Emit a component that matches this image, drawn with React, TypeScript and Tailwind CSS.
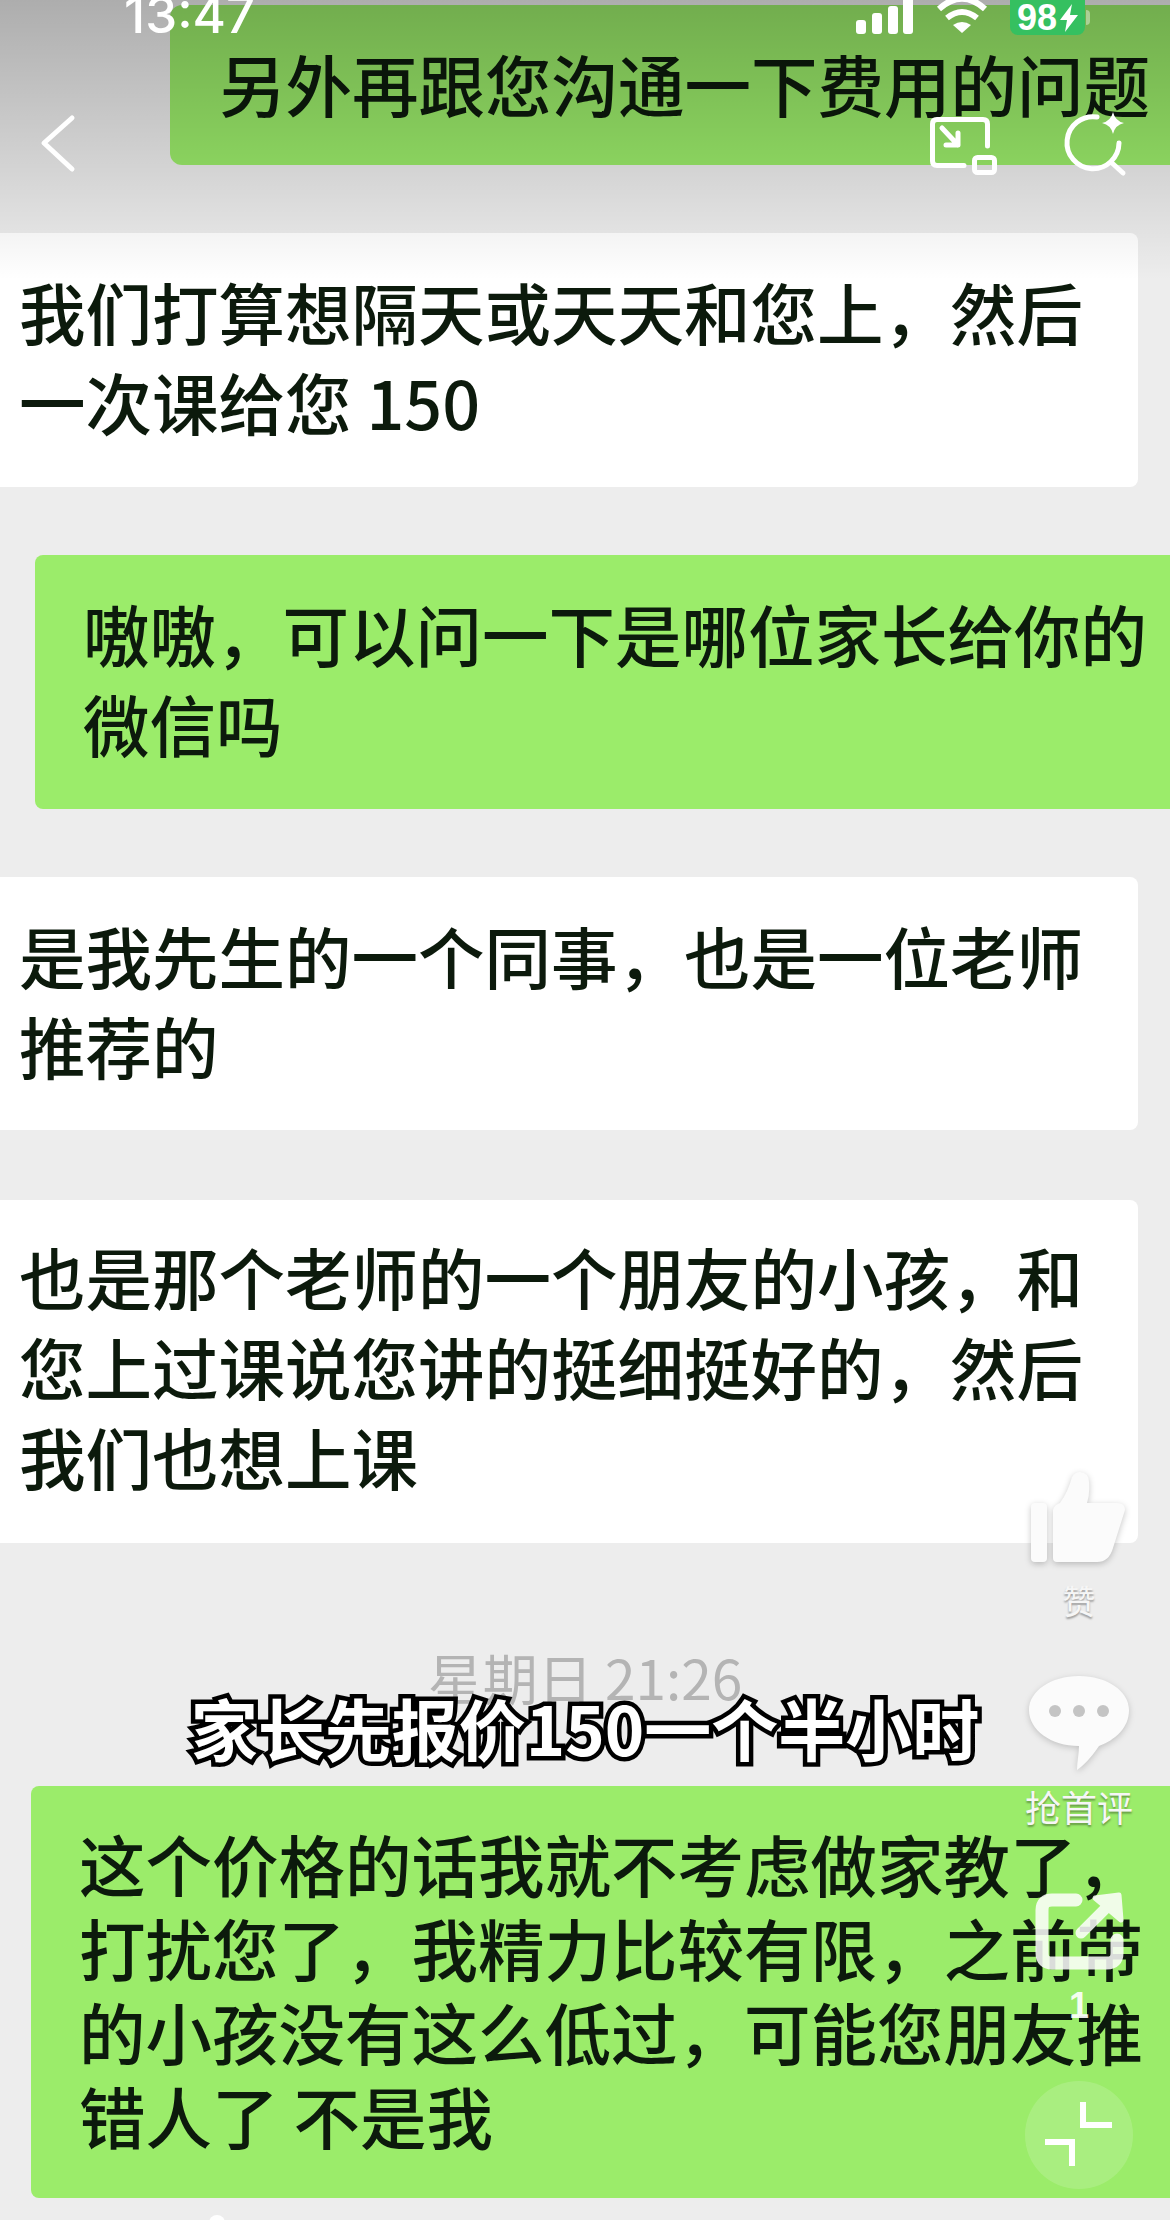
const messages = [
  {
    lines: ['另外再跟您沟通一下费用的问题'],
    box: 'mt-[5px] ml-[170px] h-[160px] pl-[49px] pt-[33px] bg-[#9bec6a] rounded-l-xl',
  },
  {
    lines: ['我们打算想隔天或天天和您上，然后', '一次课给您 150'],
    box: 'mt-[68px] w-[1138px] h-[254px] pl-[19px] pt-[33px] bg-white rounded-r-lg',
  },
  {
    lines: ['嗷嗷，可以问一下是哪位家长给你的', '微信吗'],
    box: 'mt-[68px] ml-[35px] h-[254px] pl-[48px] pt-[33px] bg-[#9bec6a] rounded-l-lg',
  },
  {
    lines: ['是我先生的一个同事，也是一位老师', '推荐的'],
    box: 'mt-[68px] w-[1138px] h-[253px] pl-[19px] pt-[33px] bg-white rounded-r-lg',
  },
  {
    lines: ['也是那个老师的一个朋友的小孩，和', '您上过课说您讲的挺细挺好的，然后', '我们也想上课'],
    box: 'mt-[70px] w-[1138px] h-[343px] pl-[19px] pt-[31px] bg-white rounded-r-lg',
  },
];

const lastLines = [
  '这个价格的话我就不考虑做家教了，',
  '打扰您了，我精力比较有限，之前带',
  '的小孩没有这么低过，可能您朋友推',
  '错人了 不是我',
];

function StatusBar() {
  return (
    <div className="absolute inset-x-0 top-0 flex items-start pl-[124px] pr-[80px] text-white">
      <div className="-mt-[15px] font-['Inter',sans-serif] text-[51px] font-medium leading-[60px]">13:47</div>
      <div className="ml-auto flex items-start">
        <svg width="60" height="34" viewBox="0 0 60 34" fill="white">
          <rect x="0" y="20" width="10" height="14" rx="3" />
          <rect x="16" y="13" width="10" height="21" rx="3" />
          <rect x="32" y="6" width="10" height="28" rx="3" />
          <rect x="47" y="-4" width="10" height="38" rx="3" />
        </svg>
        <svg className="ml-[20px]" width="52" height="34" viewBox="0 0 52 34" fill="none" stroke="white" strokeWidth="6">
          <path d="M3 9 Q26 -12 49 9" />
          <path d="M11 18 Q26 6 41 18" />
          <path d="M26 33 L17 25 Q26 19 35 25 Z" fill="white" stroke="none" />
        </svg>
        <div className="ml-[22px] flex h-[35px] w-[75px] items-center justify-center gap-[3px] rounded-b-[8px] bg-[#35c060] font-['Liberation_Sans',sans-serif] text-[36px] font-bold leading-none">
          98
          <svg width="18" height="28" viewBox="0 0 18 28" fill="white">
            <path d="M12 0 L0 16 H7 L5 28 L18 11 H10 Z" />
          </svg>
        </div>
        <div className="ml-[1px] mt-[10px] h-[15px] w-[4px] rounded-r bg-white/40" />
      </div>
    </div>
  );
}

function NavIcons() {
  return (
    <div className="absolute inset-x-0 top-[112px] flex items-start pl-[40px] pr-[40px]">
      <svg width="36" height="62" viewBox="0 0 36 62" fill="none" stroke="white" strokeWidth="5" strokeLinecap="round" strokeLinejoin="round">
        <path d="M32 6 L4 31 L32 57" />
      </svg>
      <svg className="ml-auto" width="72" height="66" viewBox="0 0 72 66" fill="none" stroke="white" strokeWidth="5" strokeLinecap="round" strokeLinejoin="round">
        <path d="M36 53.5 H9 Q4.5 53.5 4.5 49 V12 Q4.5 7.5 9 7.5 H55 Q59.5 7.5 59.5 12 V34" />
        <path d="M14 16 L30 33 M30 21 V33 H18" />
        <rect x="46.5" y="45.5" width="20" height="15" rx="3" />
      </svg>
      <svg className="ml-[62px]" width="68" height="68" viewBox="0 0 68 68" fill="none" stroke="white" strokeWidth="5" strokeLinecap="round">
        <path d="M35 5 A26 26 0 1 0 57 31" />
        <path d="M50 51 L61 61" />
        <path d="M51 0 Q53 9 62 11 Q53 13 51 22 Q49 13 40 11 Q49 9 51 0 Z" fill="white" stroke="none" />
      </svg>
    </div>
  );
}

function SideActions() {
  return (
    <div className="absolute left-[1019px] top-[1468px] flex w-[120px] flex-col items-center text-white">
      <svg className="drop-shadow-[0_2px_3px_rgba(0,0,0,0.22)]" width="104" height="98" viewBox="0 0 104 98" fill="#fbfbfb">
        <rect x="4" y="35" width="16" height="59" rx="4" />
        <path d="M26 42 Q27 37 33 35 Q41 24 45 9 Q48 4 53 4 Q62 5 62 14 Q63 26 60 35 H90 Q98 35 98 42 L86 80 Q82 94 70 94 H30 Q26 94 26 90 Z" />
      </svg>
      <div className="mt-[14px] text-[33px] leading-[40px] text-[#f6f6f6] [text-shadow:0_2px_2px_rgba(0,0,0,0.35)]">赞</div>
      <svg className="mt-[54px] drop-shadow-[0_2px_3px_rgba(0,0,0,0.18)]" width="104" height="100" viewBox="0 0 104 100" fill="#fbfbfb">
        <path d="M52 2 C80 2 102 17 102 36 C102 54 88 66 72 72 C64 84 56 92 50 96 C50 88 52 80 52 72 C24 72 2 56 2 36 C2 17 24 2 52 2 Z" />
        <circle cx="28" cy="37" r="6" fill="#c4c4c4" />
        <circle cx="52" cy="37" r="6" fill="#c4c4c4" />
        <circle cx="76" cy="37" r="6" fill="#c4c4c4" />
      </svg>
      <div className="mt-[11px] whitespace-nowrap text-[36px] leading-[42px] text-[#f6f6f6] [text-shadow:0_2px_2px_rgba(0,0,0,0.35)]">抢首评</div>
      <svg className="mt-[61px] opacity-85" width="100" height="90" viewBox="0 0 100 90" fill="none" stroke="white" strokeWidth="13" strokeLinecap="round" strokeLinejoin="round">
        <path d="M47 12 H23 Q13 12 13 22 V65 Q13 75 23 75 H78 Q88 75 88 65 V52" />
        <path d="M52 45 L77 20" strokeWidth="11" />
        <path d="M66 10 L90 7 L92 32 Z" fill="white" strokeWidth="5" />
      </svg>
      <div className="mt-[8px] font-['Liberation_Sans',sans-serif] text-[36px] font-bold leading-[40px] text-white/90">1</div>
      <div className="mt-[55px] flex h-[108px] w-[108px] items-center justify-center rounded-full bg-white/15">
        <svg width="76" height="72" viewBox="0 0 76 72" fill="none" stroke="white" strokeWidth="6">
          <path d="M42 3 V26 H71" />
          <path d="M4 43 H31 V67" />
        </svg>
      </div>
    </div>
  );
}

export default function App() {
  return (
    <div className="relative h-[2220px] w-[1170px] overflow-hidden bg-[#ededed] font-['Noto_Sans_CJK_SC',sans-serif] text-[#0c1a0c]">
      <div className="flex flex-col">
        {messages.map((msg, index) => (
          <div key={index} className={msg.box}>
            {msg.lines.map((line) => (
              <div key={line} className="whitespace-nowrap text-[66.5px] font-medium leading-[90px]">
                {line}
              </div>
            ))}
          </div>
        ))}

        <div className="mt-[103px] mb-[3px] h-[60px] text-center text-[55px] leading-[60px] text-[#b4b4b4]">星期日 21:26</div>

        <div className="mt-[77px] ml-[31px] h-[412px] rounded-l-lg bg-[#9bec6a] pl-[48px] pt-[35px]">
          {lastLines.map((line) => (
            <div key={line} className="whitespace-nowrap text-[66.5px] font-medium leading-[84px]">
              {line}
            </div>
          ))}
        </div>
      </div>

      <div className="absolute inset-x-0 top-0 h-[280px] bg-gradient-to-b from-black/27 to-transparent" />

      <StatusBar />
      <NavIcons />
      <SideActions />

      <div className="absolute inset-x-0 top-[1691px] text-center">
        <span className="whitespace-nowrap text-[67px] font-bold leading-[72px] text-white [-webkit-text-stroke:9px_black] [paint-order:stroke_fill]">
          家长先报价150一个半小时
        </span>
      </div>

      <div className="absolute left-[209px] top-[2215px] h-[16px] w-[16px] rounded-full bg-white" />
    </div>
  );
}
